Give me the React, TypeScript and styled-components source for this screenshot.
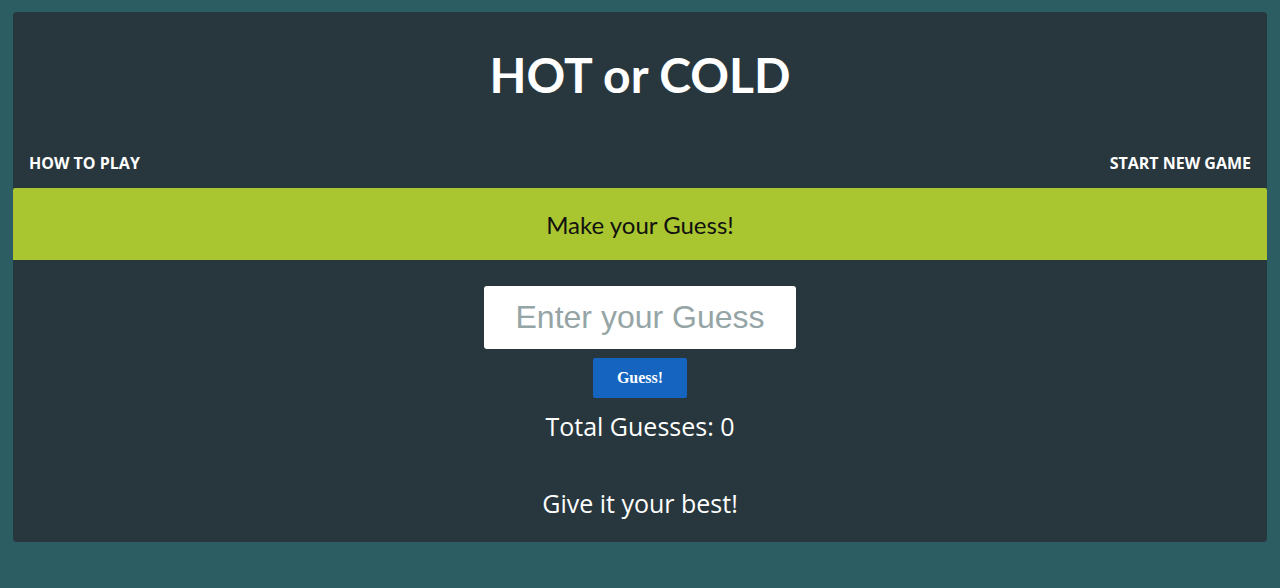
import React, { useState } from "react";
import styled, { createGlobalStyle } from "styled-components";

const GlobalStyle = createGlobalStyle`
  body {
    margin: 0;
    background-color: #2c5d63;
    font-family: "Open Sans", "Liberation Sans", sans-serif;
  }
`;

const Page = styled.div`
  padding: 12px 13px 46px;
`;

const Card = styled.main`
  background-color: #28373d;
  border-radius: 4px;
  padding-bottom: 23px;
  text-align: center;
  color: #ffffff;
`;

const Title = styled.h1`
  margin: 0;
  padding-top: 34px;
  font-family: Lato, "Liberation Sans", sans-serif;
  font-weight: 700;
  font-size: 48px;
  line-height: 58px;
  color: #ffffff;
`;

const Nav = styled.nav`
  display: flex;
  justify-content: space-between;
  align-items: center;
  padding: 49px 16px 15px 16px;
`;

const NavLink = styled.a`
  font-family: "Open Sans", "Liberation Sans", sans-serif;
  font-weight: 700;
  font-size: 16px;
  line-height: 20px;
  color: #ffffff;
  text-decoration: none;
  cursor: pointer;
`;

const Feedback = styled.div`
  display: flex;
  align-items: center;
  justify-content: center;
  height: 72px;
  background-color: #a9c52f;
  border-radius: 2px 2px 0 0;
  font-family: Lato, "Liberation Sans", sans-serif;
  font-size: 24px;
  color: #111111;
`;

const GuessForm = styled.form`
  display: flex;
  flex-direction: column;
  align-items: center;
  padding-top: 26px;
  gap: 9px;
`;

const GuessInput = styled.input`
  box-sizing: border-box;
  width: 312px;
  height: 63px;
  border: none;
  border-radius: 3px;
  background: #ffffff;
  text-align: center;
  font-family: "Liberation Sans", Arial, sans-serif;
  font-size: 32px;
  color: #333333;
  outline: none;

  &::placeholder {
    color: #95a5a6;
  }
`;

const GuessButton = styled.button`
  width: 94px;
  height: 40px;
  border: none;
  border-radius: 2px;
  background-color: #1565c0;
  color: #ffffff;
  font-family: "Liberation Serif", "Times New Roman", serif;
  font-weight: 700;
  font-size: 16px;
  cursor: pointer;
`;

const Count = styled.p<{ $gap: number }>`
  margin: ${(p) => p.$gap}px 0 0;
  font-family: "Open Sans", "Liberation Sans", sans-serif;
  font-size: 25px;
  line-height: 32px;
  color: #ffffff;
`;

export default function App() {
  const [guess, setGuess] = useState("");
  const [count, setCount] = useState(0);

  const onSubmit = (e: React.FormEvent) => {
    e.preventDefault();
    setCount(count + 1);
    setGuess("");
  };

  return (
    <>
      <GlobalStyle />
      <Page>
        <Card>
          <Title>HOT or COLD</Title>
          <Nav>
            <NavLink>HOW TO PLAY</NavLink>
            <NavLink>START NEW GAME</NavLink>
          </Nav>
          <Feedback>Make your Guess!</Feedback>
          <GuessForm onSubmit={onSubmit}>
            <GuessInput
              placeholder="Enter your Guess"
              value={guess}
              onChange={(e) => setGuess(e.target.value)}
            />
            <GuessButton type="submit">Guess!</GuessButton>
          </GuessForm>
          <Count $gap={12}>Total Guesses: {count}</Count>
          <Count $gap={45}>Give it your best!</Count>
        </Card>
      </Page>
    </>
  );
}
